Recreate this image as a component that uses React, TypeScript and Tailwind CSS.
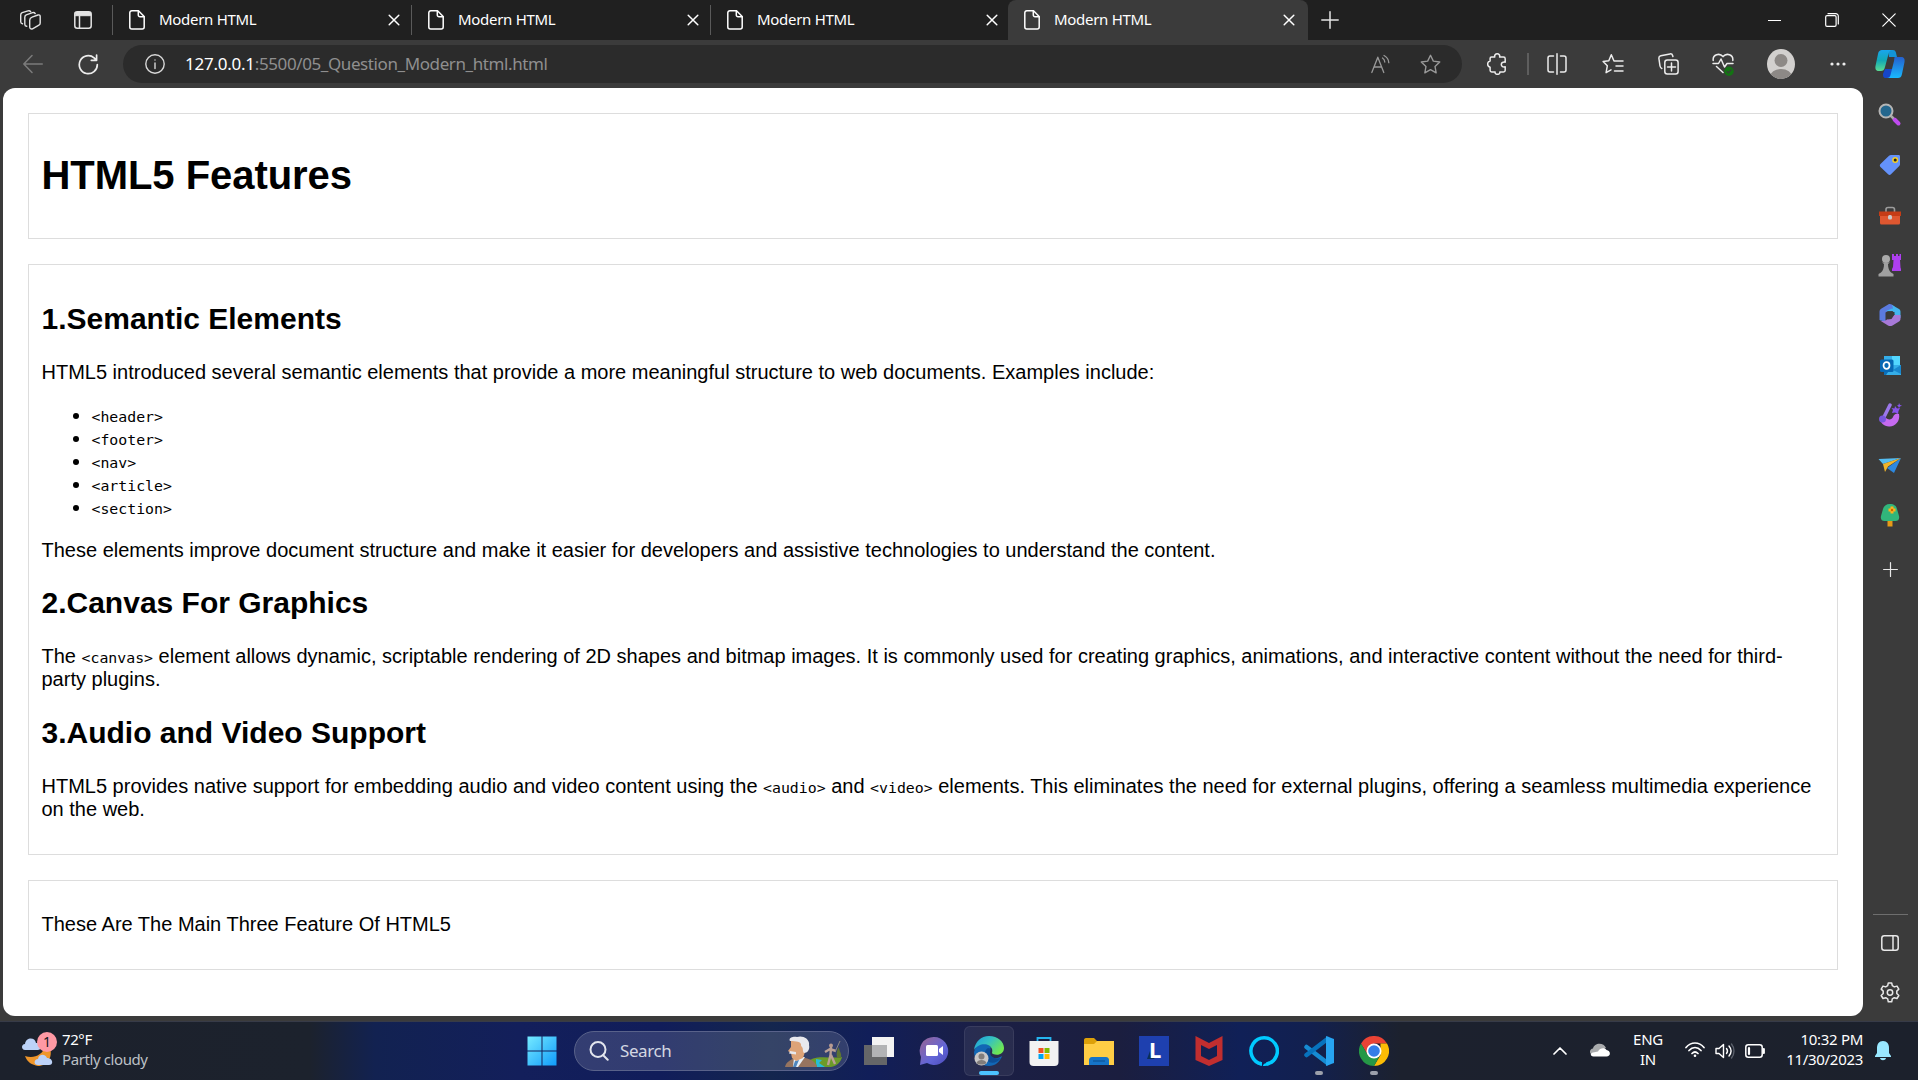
import type { ReactNode } from "react";

const line = {
  fill: "none",
  stroke: "currentColor",
  strokeWidth: 1.5,
  strokeLinecap: "round" as const,
  strokeLinejoin: "round" as const,
};

function PageIcon() {
  return (
    <svg className="h-5 w-4 shrink-0" viewBox="0 0 16 20" {...line}>
      <path d="M2.8 .8H9.5L15.2 6.5V17a2 2 0 0 1-2 2H2.8a2 2 0 0 1-2-2V2.8a2 2 0 0 1 2-2Z" />
      <path d="M9.3 1V5a1.7 1.7 0 0 0 1.7 1.7h4" />
    </svg>
  );
}

function CloseIcon() {
  return (
    <svg className="h-3 w-3 shrink-0" viewBox="0 0 12 12" {...line}>
      <path d="M1.2 1.2l9.6 9.6M10.8 1.2l-9.6 9.6" />
    </svg>
  );
}

function Tab({ active = false }: { active?: boolean }) {
  return (
    <div
      className={
        active
          ? "flex h-10 w-[300px] items-center rounded-t-lg bg-[#3b3b3b] pr-[13px] pl-4 text-white"
          : "flex h-10 w-[299px] items-center pr-3 pl-4 text-white"
      }
    >
      <PageIcon />
      <span className="ml-[14px] flex-1 pb-[2px] text-[15px] leading-5 tracking-[-0.3px]">Modern HTML</span>
      <CloseIcon />
    </div>
  );
}

function TabStrip() {
  return (
    <div className="flex h-10 items-center bg-[#202020] text-[#e4e4e4]">
      <div className="flex w-[112px] items-center pl-5">
        <svg className="h-5 w-[21px]" viewBox="0 0 21 20" {...line} strokeWidth={1.4}>
          <path d="M12 7.200l6-2.200c1.300-.4 2.200.3 2.200 1.600v6.400c0 1-.4 1.800-1.300 2.200L12.500 18.800c-1.500.6-2.800-.2-2.800-1.700V10.200c0-1.600.8-2.500 2.300-3Z" />
          <path d="M6.700 16.300c-1.200-.2-1.900-1-1.900-2.100V7.200c0-1.200.5-1.900 1.500-2.300l6.200-2.200c1.300-.4 2.200 0 2.700.9" />
          <path d="M2.500 13.800C1.300 13.500.7 12.800.7 11.700V4.900c0-1.200.5-1.900 1.500-2.300L8 .9c1.200-.3 2.100 0 2.600.8" />
        </svg>
        <svg className="ml-[33px] h-[18px] w-[18px]" viewBox="0 0 18 18" {...line}>
          <rect x=".8" y=".8" width="16.400" height="16.400" rx="2.500" />
          <path d="M1.500 1.500h15v3.200h-15Z" fill="currentColor" strokeWidth="1" />
          <path d="M5.500 5v12" />
        </svg>
      </div>
      <div className="h-[30px] w-px bg-[#5a5a5a]" />
      <Tab />
      <div className="-ml-px h-[30px] w-px bg-[#5a5a5a]" />
      <Tab />
      <div className="-ml-px h-[30px] w-px bg-[#5a5a5a]" />
      <Tab />
      <div className="-ml-[2px]">
        <Tab active />
      </div>
      <svg className="ml-[13px] h-[18px] w-[18px]" viewBox="0 0 18 18" {...line}>
        <path d="M9 .8v16.400M.8 9h16.400" />
      </svg>
      <div className="ml-auto flex items-center text-white">
        <div className="flex w-[57px] justify-center"><div className="h-px w-[13px] bg-white" /></div>
        <div className="flex w-[57px] justify-center">
          <svg className="h-[14px] w-[14px]" viewBox="0 0 14 14" {...line} strokeWidth={1.2}>
            <rect x=".7" y="2.700" width="10.400" height="10.600" rx="1.300" />
            <path d="M3 .7h7.800a2.500 2.500 0 0 1 2.500 2.500V11" />
          </svg>
        </div>
        <div className="flex w-[58px] justify-center">
          <svg className="h-[14px] w-[14px]" viewBox="0 0 14 14" {...line} strokeWidth={1.200}>
            <path d="M.8.800l12.400 12.400M13.200.8L.8 13.200" />
          </svg>
        </div>
      </div>
    </div>
  );
}

const starPath = "M10 1.200l2.700 5.600 6.100.8-4.500 4.200 1.100 6.100-5.400-3-5.400 3 1.100-6.100L1.200 7.600l6.100-.8Z";

function Cell({ className, children }: { className: string; children: ReactNode }) {
  return <div className={`flex shrink-0 items-center justify-center ${className}`}>{children}</div>;
}

function Toolbar() {
  return (
    <div className="flex h-12 items-center bg-[#3b3b3b] text-[#ececec]">
      <Cell className="w-[65px]">
        <svg className="h-5 w-5 text-[#7b7b7b]" viewBox="0 0 20 20" {...line}>
          <path d="M19.300 10H.8M9 1.500L.8 10 9 18.500" />
        </svg>
      </Cell>
      <Cell className="w-[58px] pr-[12px]">
        <svg className="h-[21px] w-[21px]" viewBox="0 0 21 21" {...line} strokeWidth={1.700}>
          <path d="M19.300 10.500a9 9 0 1 1-3.200-6.700l2.300 2.300M18.600 1v5.300h-5.300" />
        </svg>
      </Cell>
      <div className="flex h-[38px] w-[1339px] items-center rounded-full bg-[#2b2b2b] pl-[22px]">
        <svg className="h-5 w-5 text-[#d8d8d8]" viewBox="0 0 20 20" {...line} strokeWidth={1.400}>
          <circle cx="10" cy="10" r="9.200" />
          <path d="M10 9v5.500M10 5.900v.2" />
        </svg>
        <span className="ml-5 text-[17px] leading-6 tracking-[-0.4px] text-[#8f8f8f]">
          <span className="tracking-[-0.25px] text-white">127.0.0.1</span>:5500/05_Question_Modern_html.html
        </span>
        <div className="ml-auto flex items-center pr-[21px] text-[#999]">
          <svg className="h-5 w-5" viewBox="0 0 20 20" {...line} strokeWidth={1.300}>
            <path d="M.8 18.500L6.800 3.200l6 15.300M3 13h7.600M11.500 4c1.500 1 2.200 2.300 2.300 4M13 1.500c3 1.600 4.600 4 4.800 7.200" />
          </svg>
          <svg className="ml-[29px] h-[21px] w-[21px]" viewBox="0 0 20 20" {...line} strokeWidth={1.300}>
            <path d={starPath} />
          </svg>
        </div>
      </div>
      <Cell className="ml-[6px] w-[58px]">
        <svg className="h-[22px] w-5" viewBox="0 0 20 22" {...line}>
          <path d="M4.500 4h3.300C7.200 2.200 8.500.8 10.200.8S13.200 2.200 12.600 4h3.900c1 0 1.700.7 1.700 1.700v3.500c-2.200-.4-3.900.4-3.900 2.300s1.700 2.800 3.900 2.300v3.500c0 1-.7 1.700-1.700 1.700h-3.700c.3 1.500-.9 2.300-2.300 2.300s-2.700-.8-2.400-2.300H4.700c-1 0-1.600-.7-1.600-1.700v-3C-.2 13.300-.2 8.700 3.100 8V5.500C3.100 4.600 3.600 4 4.500 4Z" />
        </svg>
      </Cell>
      <div className="ml-px h-[22px] w-[2px] bg-[#5e5e5e]" />
      <Cell className="w-[56px]">
        <svg className="h-[22px] w-5" viewBox="0 0 20 22" {...line}>
          <path d="M10 .8v20.400M6.500 3H3a2 2 0 0 0-2 2v12a2 2 0 0 0 2 2h3.500M13.500 3H17a2 2 0 0 1 2 2v12a2 2 0 0 1-2 2h-3.500" />
        </svg>
      </Cell>
      <Cell className="w-[56px]">
        <svg className="h-[22px] w-[22px]" viewBox="0 0 22 22" {...line}>
          <path d="M9 16.900l-4.900 2.800 1.200-6.900L1.100 8.500l5.700-.8 2.500-5.900L12 8h9M14 13h7M12.500 18H21" />
        </svg>
      </Cell>
      <Cell className="w-[54px]">
        <svg className="h-[22px] w-[21px]" viewBox="0 0 21 22" {...line}>
          <rect x="6.800" y="7" width="13.300" height="14" rx="2.500" />
          <path d="M13.500 10v8M9.500 14h8M3.800 15.500C2.700 15 2.200 14.200 2 13L.9 5.500C.7 4 1.400 3.100 2.800 2.800L12 .9c1.400-.2 2.300.4 2.700 1.800l.2.800" />
        </svg>
      </Cell>
      <Cell className="w-[56px]">
        <svg className="h-[23px] w-[22px]" viewBox="0 0 22 23" {...line}>
          <path d="M1.200 7.500C.5 1.500 7.500-.5 11 3.600c3.500-4.100 10.500-2.100 9.800 3.900M1 10.500h5.500L9 6l3.500 8L15 10.500h6M4.500 13.500l6.500 6" />
          <circle cx="17" cy="18.300" r="4.700" fill="#137313" stroke="none" />
          <path d="M15 18.400l1.400 1.400 2.700-2.900" stroke="#3a3a3a" strokeWidth="1.200" />
        </svg>
      </Cell>
      <Cell className="w-[59px]">
        <svg className="h-[30px] w-[28px]" viewBox="0 0 28 30">
          <clipPath id="avatar"><ellipse cx="14" cy="15" rx="14" ry="15" /></clipPath>
          <g clipPath="url(#avatar)">
            <path fill="#d2d0ce" d="M0 0h28v30H0z" />
            <circle cx="14" cy="11.500" r="6.500" fill="#8d8986" />
            <ellipse cx="14" cy="28" rx="11" ry="8" fill="#8d8986" />
          </g>
        </svg>
      </Cell>
      <Cell className="w-[55px]">
        <svg className="h-1 w-4" viewBox="0 0 16 4" fill="currentColor">
          <circle cx="2" cy="2" r="1.600" /><circle cx="8" cy="2" r="1.600" /><circle cx="14" cy="2" r="1.600" />
        </svg>
      </Cell>
      <Cell className="w-[50px]">
        <svg className="h-[30px] w-[30px]" viewBox="0 0 30 30">
          <defs>
            <linearGradient id="cpA" x1="0" y1="0" x2="0" y2="1"><stop stopColor="#19a5ee" /><stop offset=".5" stopColor="#12a9b5" /><stop offset="1" stopColor="#5bdc92" /></linearGradient>
            <linearGradient id="cpB" x1="0" y1="0" x2="0" y2="1"><stop stopColor="#2560ce" /><stop offset="1" stopColor="#19b9ff" /></linearGradient>
          </defs>
          <path fill="#1646c9" d="M10 20h9l-3 9H11c-3 0-3-2-3-4Z" />
          <path fill="#1394d8" d="M13 1h5c3 0 3 3 4 7h-8Z" />
          <path fill="url(#cpA)" d="M7 1h10c-2 0-3 2-3.500 4L10 18c-.8 3-2 4-4 4H4c-3 0-4-2-3.500-5L3 5c.6-3 2-4 4-4Z" />
          <path fill="url(#cpB)" d="M20 8h6c3 0 4 2 3.500 5L27 25c-.6 3-2 4-4 4H12c2 0 3-1 3.500-3L19 12c.5-2 0-4 1-4Z" />
        </svg>
      </Cell>
    </div>
  );
}

function Code({ children }: { children: string }) {
  return <code className="font-['DejaVu_Sans_Mono',monospace] text-[14.85px] leading-none">{children}</code>;
}

function Heading({ children }: { children: string }) {
  return <h2 className="mt-[24.5px] mb-[25px] text-[30px] leading-[34px] font-bold">{children}</h2>;
}

const tags = ["<header>", "<footer>", "<nav>", "<article>", "<section>"];

function Document() {
  return (
    <main className="ml-[3px] h-[928px] w-[1860px] rounded-xl bg-white px-[25px] pt-[25px] font-['Liberation_Sans',Arial,sans-serif] text-[20px] leading-[23px] text-black">
      <header className="flow-root h-[126px] border border-[#dddddd] px-[12.5px] pt-3">
        <h1 className="mt-[26px] text-[40px] leading-[46px] font-bold tracking-[-0.05px]">HTML5 Features</h1>
      </header>
      <section className="mt-[25px] flow-root h-[591px] border border-[#dddddd] px-[12.5px] pt-3">
        <Heading>1.Semantic Elements</Heading>
        <p>HTML5 introduced several semantic elements that provide a more meaningful structure to web documents. Examples include:</p>
        <ul className="my-5 list-disc pl-[50px]">
          {tags.map((t) => <li key={t}><Code>{t}</Code></li>)}
        </ul>
        <p>These elements improve document structure and make it easier for developers and assistive technologies to understand the content.</p>
        <Heading>2.Canvas For Graphics</Heading>
        <p>The <Code>{"<canvas>"}</Code> element allows dynamic, scriptable rendering of 2D shapes and bitmap images. It is commonly used for creating graphics, animations, and interactive content without the need for third-party plugins.</p>
        <Heading>3.Audio and Video Support</Heading>
        <p>HTML5 provides native support for embedding audio and video content using the <Code>{"<audio>"}</Code> and <Code>{"<video>"}</Code> elements. This eliminates the need for external plugins, offering a seamless multimedia experience on the web.</p>
      </section>
      <footer className="mt-[25px] flow-root h-[90px] border border-[#dddddd] px-[12.5px] pt-3">
        <p className="mt-5">These Are The Main Three Feature Of HTML5</p>
      </footer>
    </main>
  );
}

function SideIcon({ children }: { children: ReactNode }) {
  return (
    <div className="flex h-[50px] items-center justify-center">
      <svg className="h-6 w-6" viewBox="0 0 24 24">{children}</svg>
    </div>
  );
}

function Sidebar() {
  return (
    <aside className="flex w-[54px] flex-col pt-[2px] text-[#e8e8e8]">
      <SideIcon>
        <path d="M16.500 16.500l4 4" stroke="#c04bf0" strokeWidth="4" strokeLinecap="round" />
        <path d="M12.500 12.500l3 3" stroke="#aaa" strokeWidth="2.500" />
        <circle cx="8" cy="8" r="6.500" fill="#24678e" stroke="#b5b5b5" strokeWidth="2" />
      </SideIcon>
      <SideIcon>
        <path d="M13 2h7.500c1 0 1.500.5 1.500 1.500V11c0 1-.3 1.600-1 2.300l-8 8c-.9.900-2 .9-2.900 0L2.500 14c-.9-1-.9-2 0-3L11 2.800c.6-.6 1.200-.8 2-.8Z" fill="#6492fa" />
        <circle cx="17.200" cy="7" r="2.300" fill="#222" stroke="#f5cf26" strokeWidth="1.500" />
      </SideIcon>
      <SideIcon>
        <path d="M8 9V6.500C8 5 8.500 4.500 10 4.500h4.500c1.500 0 2 .5 2 2V9" fill="none" stroke="#9c9c9c" strokeWidth="1.600" />
        <rect x="2" y="9" width="20" height="12.500" rx="1.500" fill="#df5730" />
        <path fill="#c53c16" d="M1 8.500h22v4.500H1z" />
        <rect x="10" y="12" width="4" height="4.500" rx="1.500" fill="#c9c9c9" />
      </SideIcon>
      <SideIcon>
        <path fill="#ae3ff0" d="M14 1h2v2h2V1h2v2h1.500V1H23v6h-1l.5 7.500L23 16v2h-9v-2l1-2 .5-7H14Z" />
        <circle cx="8" cy="6" r="4" fill="#aaa" />
        <path fill="#a0a0a0" d="M4 9.500h8L10 11c0 4 1 6.500 3 8.500L15.500 21v2.500H.5V21L3 19.500c2-2 3-4.500 3-8.500Z" />
      </SideIcon>
      <SideIcon>
        <path fill="#5b7be0" d="M11 1L3.500 5.500C2 6.500 1.500 7.500 1.500 9v8l6 2V9.500L17 4l-2.500-2c-1-.8-2.200-1-3.500-1Z" />
        <path fill="#43b6f0" d="M14 2l7 4c1 .7 1.500 1.700 1.500 3v6L16.500 12V9L8 8l7-3Z" />
        <path fill="#a779d8" d="M22.500 12v3.500c0 1.300-.5 2.300-1.500 3l-6.500 4c-1.500.8-3 .8-4.500 0L2 17.500c3 1 5 .5 7-1l7-4.500Z" />
        <path fill="#3b3b3b" d="M9.500 8.500l5-.5 2 3.500-3 4.500-4 .5Z" />
      </SideIcon>
      <SideIcon>
        <path fill="#0b70ba" d="M6 3h16v19H6Z" /><path fill="#35aee8" d="M6 3h9v9H6zM15 12h8v10H8Z" />
        <path fill="#53d7ff" d="M14 3h8v9h-8z" /><path fill="#1987cd" d="M15 17l8-5v9Z" />
        <rect x="2" y="6.500" width="13.500" height="12.500" rx="1.500" fill="#0768b4" />
        <ellipse cx="8.500" cy="12.500" rx="3" ry="3.300" fill="none" stroke="#fff" strokeWidth="1.700" />
      </SideIcon>
      <SideIcon>
        <path fill="#c66af0" d="M2 14c2 2 4 2 6 1 2 2 6 2 7-1 1-2 2-4 6-3 1.500 7-4 13-10 12.500C6 23.500 2 20 2 14Z" />
        <path d="M12 2L5 16" stroke="#9b77eb" strokeWidth="3.500" strokeLinecap="round" /><circle cx="4.500" cy="16" r="3.500" fill="#7856dd" />
        <path fill="#8853ec" d="M17 3l2 2.500 3-.5-1.500 3L20 11l-3-1.500L14 10l1-3-1.500-2 3 .500ZM21 0l1 2 2 .500-2 1-1 1.500-.700-1.500-1.300-1 1.500-.500Z" />
      </SideIcon>
      <SideIcon>
        <path fill="#54bdf2" d="M.500 6L23 5 5 11Z" /><path fill="#2d88df" d="M23 5l-7 15-7-5Z" />
        <path fill="#efb52c" d="M5 11l18-6L10 13.500 7 19Z" />
      </SideIcon>
      <SideIcon>
        <rect x="9.500" y="15" width="5" height="8.500" fill="#e69a18" />
        <path fill="#31b67b" d="M12 1c4 0 6.500 2 7 5l2 7c.8 3-1 5-3.500 5h-11C4 18 2.200 16 3 13l2-7c.8-3 3-5 7-5Z" />
        <path fill="#ffb11b" d="M12.500 3.500h3v2h2v3h-2v2h-3v-2h-2v-3h2Z" /><circle cx="14" cy="7" r="1.200" fill="#c86800" />
      </SideIcon>
      <div className="flex h-[58px] items-center justify-center">
        <svg className="h-[15px] w-[15px]" viewBox="0 0 15 15" {...line} strokeWidth={1.200}><path d="M7.500.6v13.800M.6 7.500h13.800" /></svg>
      </div>
      <div className="mr-[9px] ml-[10px] mt-auto h-px bg-[#6e6e6e]" />
      <Cell className="h-[56px]">
        <svg className="h-4 w-[18px]" viewBox="0 0 18 16" {...line}><rect x=".8" y=".8" width="16.400" height="14.400" rx="2.500" /><path d="M12 1v14" /></svg>
      </Cell>
      <Cell className="mb-[6px] h-11">
        <svg className="h-[22px] w-[22px]" viewBox="0 0 22 22" {...line}>
          <path d="M9.300 1h3.400l.6 2.700 2 1.200 2.700-.8 1.800 3-2 2v2.400l2 2-1.800 3-2.700-.8-2 1.200-.6 2.900H9.300l-.6-2.900-2-1.200-2.700.8-1.800-3 2-2V9.100l-2-2 1.800-3 2.700.8 2-1.200Z" />
          <circle cx="11" cy="10.500" r="2.700" />
        </svg>
      </Cell>
    </aside>
  );
}

function AppCell({ children }: { children: ReactNode }) {
  return (
    <Cell className="w-[55px]">
      <svg className="h-[30px] w-[30px]" viewBox="0 0 30 30">{children}</svg>
    </Cell>
  );
}

function Author() {
  return (
    <svg className="ml-auto h-[31px] w-[58px]" viewBox="0 0 58 31">
      <path fill="#6c9b29" d="M25 24c9-5 21-1 32-3-1 5-5 9-11 10H22Z" />
      <path fill="#27bdd8" d="M31 23l6 1-3 3 6 4h-8l-1-4Z" />
      <path fill="#5d7433" d="M52 22c-1-5 0-8 2-11 0 5 3 5 2 11Z" />
      <path d="M46 11l-.5 8L43 29M46 19l4 9M40 16l5-3 6 2" stroke="#baa095" strokeWidth="2.400" fill="none" />
      <path d="M50 16l5-11" stroke="#8d8a86" strokeWidth="1" />
      <circle cx="46" cy="9.500" r="2" fill="#b89b91" />
      <path fill="#96745f" d="M0 31c1-5 5-7 10-9h10c6 1 11 4 12 9Z" />
      <path fill="#e9f0f7" d="M9 21h11l-7 10H8Z" /><path fill="#4f86bd" d="M10 25l4-1-3 7H8Z" />
      <path fill="#dda378" d="M6 5h12l3 8-3 9-7 3-4-3-1-5-3-2 3-4Z" />
      <path fill="#e8e8ed" d="M5 5C3 2 8 0 12 1c6-2 13 2 12 8 1 4-1 8-5 8-2-2 0-5-3-7 1-4-4-5-11-5ZM5 15l6 1v2.500l-7-1Z" />
    </svg>
  );
}

function Taskbar() {
  return (
    <div className="flex h-[59px] items-center border-t border-[#373b48] bg-[linear-gradient(90deg,#1c212c_0px,#1c222d_310px,#122251_375px,#131f5b_520px,#111d5a_660px,#14264e_770px,#111e59_870px,#1b1f45_980px,#1b1e3f_1120px,#102057_1240px,#12204f_1310px,#1c212e_1400px,#1c212c_1918px)] text-[15px] leading-5 text-white">
      <div className="flex w-[514px] items-center pl-[22px]">
        <svg className="mb-[4px] h-[36px] w-[36px]" viewBox="0 0 36 36">
          <path fill="#ef962b" d="M3 25c9 3 17-1 20-9l4-2c5 11-1 21-11 21C10 34 5 31 3 25Z" />
          <path fill="#bcd2f8" d="M3 19c-4 0-4-6 0-6 1-7 10-7 11-1 7-1 7 7 2 7ZM16 34c-5 0-4-6 0-6 1-6 8-5 9-1 6 0 7 7 2 7Z" />
          <circle cx="25" cy="11" r="10" fill="#ff99a4" />
          <text x="25" y="16" textAnchor="middle" fontSize="14" fill="#15171e">1</text>
        </svg>
        <div className="mb-1 ml-1 leading-[20px]">
          <div className="tracking-[-0.4px]">72°F</div>
          <div className="tracking-[-0.4px] text-[#bcc0c6]">Partly cloudy</div>
        </div>
      </div>
      <AppCell>
        <defs><linearGradient id="win" x1="0" y1="0" x2="1" y2="1"><stop stopColor="#75eaff" /><stop offset="1" stopColor="#109bfb" /></linearGradient></defs>
        <path fill="url(#win)" d="M.500.500h14v14H.5ZM15.500.500h14v14h-14ZM.5 15.500h14v14H.5ZM15.500 15.500h14v14h-14Z" />
      </AppCell>
      <div className="ml-[5px] flex h-10 w-[275px] items-center rounded-full border border-[#59628a] bg-[#ffffff24] pr-[5px] pl-[14px]">
        <svg className="h-5 w-5 text-[#e2e5ed]" viewBox="0 0 20 20" {...line} strokeWidth={2}><circle cx="9" cy="8.500" r="7.500" /><path d="M14.200 14.200l4.500 4.500" /></svg>
        <span className="ml-[11px] text-[17px] tracking-[-0.4px] text-[#d4d7e2]">Search</span>
        <Author />
      </div>
      <div className="ml-[2px] flex h-full items-center">
        <AppCell>
          <path fill="#f3f3f3" d="M8 1h22v20H8z" /><path fill="#656668" d="M0 9h23v20H0z" /><path fill="#b2b3b5" d="M8 9h15v12H8z" />
        </AppCell>
        <AppCell>
          <defs><linearGradient id="chat" x1="0" y1="0" x2="1" y2="1"><stop stopColor="#9b6590" /><stop offset=".6" stopColor="#6266d8" /><stop offset="1" stopColor="#4b49b9" /></linearGradient></defs>
          <path fill="url(#chat)" d="M15 1a14 14 0 1 1-7 26L1 29l1-8A14 14 0 0 1 15 1Z" /><rect x="7" y="9" width="12" height="11" rx="1.500" fill="#fff" /><path fill="#fff" d="M20 13l4-3v9l-4-3Z" />
        </AppCell>
        <div className="mx-[2.5px] flex h-[50px] w-[50px] flex-col items-center rounded-md border border-[#ffffff14] bg-[#ffffff10] pt-[9px]">
          <svg className="h-[30px] w-[30px] shrink-0" viewBox="0 0 30 30">
            <defs><linearGradient id="edgeTop" x1="0" y1="0" x2="1" y2=".6"><stop stopColor="#1b9cde" /><stop offset=".5" stopColor="#35c1c2" /><stop offset="1" stopColor="#70e850" /></linearGradient></defs>
            <path fill="#1267b5" d="M1 13C5 5 15 7 17 12c-5 2-3 9 3 10 3 .5 6-.5 8-2-2 6-7 10-13 10C7 30 0 24 0 16Z" />
            <path fill="#0d4e96" d="M14 12c-4 2-5 10 1 14 4 2 9 0 12-4-8 2-13-3-10-9Z" />
            <path fill="url(#edgeTop)" d="M0 14C1 6 7 0 15 0c9 0 15 6 15 12 0 6-6 8-11 6-2-1 0-2-1-5C16 7 5 6 0 14Z" />
            <circle cx="7.500" cy="22.500" r="7" fill="#c9c8c8" /><circle cx="7.500" cy="20.500" r="3" fill="#817d7b" /><path fill="#817d7b" d="M2.500 27c1-4 9-4 10 0-2 2-8 2-10 0Z" />
          </svg>
          <div className="mt-[5px] h-1 w-5 shrink-0 rounded-full bg-[#4cc2ff]" />
        </div>
        <AppCell>
          <path d="M8.500 6V2h13v4" fill="none" stroke="#25b5ef" strokeWidth="1.800" /><path fill="#f2f2f2" d="M.5 5h29v21a4 4 0 0 1-4 4h-21a4 4 0 0 1-4-4Z" />
          <path fill="#f25022" d="M9.500 12H14.500v5h-5z" /><path fill="#7fba00" d="M15.500 12h5v5h-5z" /><path fill="#00a4ef" d="M9.500 18h5v5h-5z" /><path fill="#ffb900" d="M15.500 18h5v5h-5z" />
        </AppCell>
        <AppCell>
          <path fill="#dda009" d="M0 4c0-1 .5-2 2-2h8l3 3v8H0Z" /><path fill="#ffcd45" d="M0 8h10l3-3h17v24H0Z" />
          <path fill="#1674c8" d="M5 29v-5c0-1.500 1-3 3-3h14c2 0 3 1.500 3 3v5Z" /><path d="M9 25h12" stroke="#0b4c8c" />
        </AppCell>
        <AppCell>
          <path fill="#1e40af" d="M0 0h30v30H0z" />
          <path fill="#0b2f58" d="M11 12v11h5l-5-4zM11 15l-3 8h4Z" />
          <text x="10" y="22" fontSize="22" fontWeight="700" fill="#fff">L</text>
        </AppCell>
        <AppCell>
          <path fill="#c12e2f" fillRule="evenodd" d="M1.500 0L15 7 28.500 0v24L15 30 1.500 24ZM7 9v11l8 4 8-4V9l-8 4Z" />
        </AppCell>
        <AppCell>
          <path d="M12.800 28A13.200 13.200 0 1 1 17.500 28" fill="none" stroke="#00caff" strokeWidth="3.500" />
          <path fill="#00caff" d="M11 25.500c1.800.6 2 1.500 2 4.300l-3-.8ZM19.500 25.500l1 3.500c-2 .8-4 1-6.500 1 0-2.500 3-2.500 5.500-4.500Z" />
        </AppCell>
        <Cell className="w-[55px] flex-col pt-[9px]">
          <svg className="h-[30px] w-[30px]" viewBox="0 0 30 30">
            <path d="M2.500 11l21 16" stroke="#168bd3" strokeWidth="4.500" strokeLinecap="round" /><path d="M2.500 19l21-16" stroke="#0772bd" strokeWidth="4.500" strokeLinecap="round" /><path fill="#27a4f1" d="M22 0l8 3v24l-8 3Z" />
          </svg>
          <div className="mt-[5px] h-1 w-2 rounded-full bg-[#9ca0ab]" />
        </Cell>
        <Cell className="w-[55px] flex-col pt-[9px]">
          <svg className="h-[30px] w-[30px]" viewBox="0 0 30 30">
            <path fill="#ea4335" d="M2 7.500A15 15 0 0 1 28 7.500H15l-6.500 11Z" /><path fill="#fbbc05" d="M28 7.500A15 15 0 0 1 15 30l6.500-11V7.500Z" /><path fill="#259846" d="M15 30A15 15 0 0 1 2 7.500l6.500 11 6.500 3.500 5-1Z" />
            <circle cx="15" cy="15" r="7.500" fill="#fff" /><circle cx="15" cy="15" r="5.800" fill="#357de8" />
          </svg>
          <div className="mt-[5px] h-1 w-2 rounded-full bg-[#9ca0ab]" />
        </Cell>
      </div>
      <div className="ml-auto flex h-full items-center">
        <svg className="h-2 w-[14px]" viewBox="0 0 14 8" {...line} strokeWidth={1.700}><path d="M1 7l6-6 6 6" /></svg>
        <svg className="mb-[2px] ml-[23px] h-[14px] w-5" viewBox="0 0 20 14">
          <path fill="#a9abad" d="M1 11C-1 9 0 6 3 5.500 4-.5 14-1 16 5L8 9Z" />
          <path fill="#fff" d="M3.500 13.500C0 13.500 0 10 3 9.500l5-1c2-4 7-4 8.500-1.500 4.500.5 4.500 6.500 0 6.500Z" />
        </svg>
        <div className="mb-1 ml-[21px] w-[34px] text-center tracking-[-0.3px]">ENG<br />IN</div>
        <svg className="mb-[2px] ml-[20px] h-4 w-5" viewBox="0 0 20 16" {...line} strokeWidth={1.700}><path d="M1 5.500c5-6 13-6 18 0M4 8.500c3.500-4 8.500-4 12 0M7 11.500c2-2 4-2 6 0" /><circle cx="10" cy="13.800" r="1.300" fill="currentColor" stroke="none" /></svg>
        <svg className="mb-px ml-[10px] h-[18px] w-5" viewBox="0 0 20 18" {...line} strokeWidth={1.400}><path d="M1 6.500h3l4.500-4v13l-4.500-4H1ZM11.500 6.500c1.200 1.500 1.200 3.500 0 5M14 4c2.500 3 2.500 7 0 10" /><path d="M16.500 2c3.300 4 3.300 10 0 14" stroke="#5b606b" /></svg>
        <svg className="mb-px ml-[10px] h-[14px] w-5" viewBox="0 0 20 14" {...line}><rect x=".8" y=".8" width="16.400" height="12.400" rx="2.500" /><path d="M4 4v6M18.800 5v4" strokeWidth="2.200" /></svg>
        <div className="mb-1 ml-[20px] w-[78px] text-right tracking-[-0.3px] whitespace-nowrap">10:32 PM<br />11/30/2023</div>
        <svg className="mr-[27px] mb-px ml-[12px] h-5 w-4" viewBox="0 0 16 20"><path fill="#99e8ff" d="M8 0c4 0 6 3 6 7v5l2 3v1H0v-1l2-3V7c0-4 2-7 6-7ZM5 17h6c-.5 3-5.500 3-6 0Z" /></svg>
      </div>
    </div>
  );
}

export default function App() {
  return (
    <div className="flex h-[1080px] w-[1918px] flex-col overflow-hidden bg-[#3b3b3b] font-['Noto_Sans','Open_Sans',sans-serif]">
      <TabStrip />
      <Toolbar />
      <div className="flex flex-1">
        <Document />
        <Sidebar />
      </div>
      <Taskbar />
    </div>
  );
}
